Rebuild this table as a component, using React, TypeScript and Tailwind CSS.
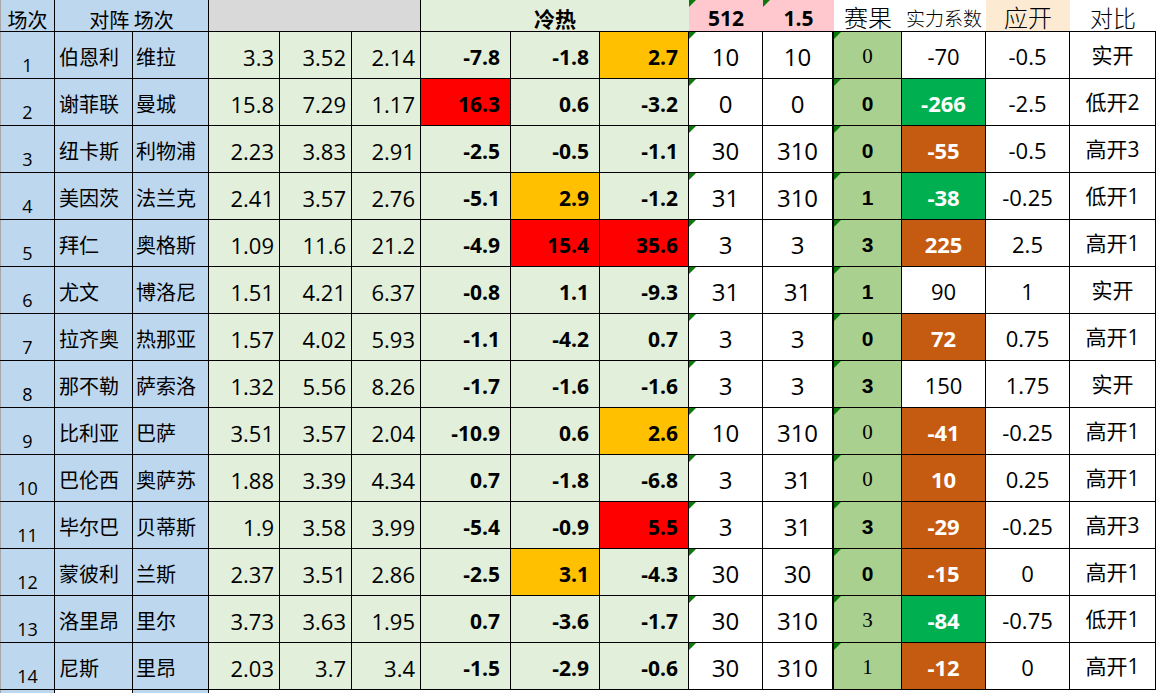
const rows: (string | number)[][] = [
  [1, '伯恩利', '维拉', '3.3', '3.52', '2.14', '-7.8', '-1.8', '2.7', '10', '10', '0', '-70', '-0.5', '实开'],
  [2, '谢菲联', '曼城', '15.8', '7.29', '1.17', '16.3', '0.6', '-3.2', '0', '0', '0', '-266', '-2.5', '低开2'],
  [3, '纽卡斯', '利物浦', '2.23', '3.83', '2.91', '-2.5', '-0.5', '-1.1', '30', '310', '0', '-55', '-0.5', '高开3'],
  [4, '美因茨', '法兰克', '2.41', '3.57', '2.76', '-5.1', '2.9', '-1.2', '31', '310', '1', '-38', '-0.25', '低开1'],
  [5, '拜仁', '奥格斯', '1.09', '11.6', '21.2', '-4.9', '15.4', '35.6', '3', '3', '3', '225', '2.5', '高开1'],
  [6, '尤文', '博洛尼', '1.51', '4.21', '6.37', '-0.8', '1.1', '-9.3', '31', '31', '1', '90', '1', '实开'],
  [7, '拉齐奥', '热那亚', '1.57', '4.02', '5.93', '-1.1', '-4.2', '0.7', '3', '3', '0', '72', '0.75', '高开1'],
  [8, '那不勒', '萨索洛', '1.32', '5.56', '8.26', '-1.7', '-1.6', '-1.6', '3', '3', '3', '150', '1.75', '实开'],
  [9, '比利亚', '巴萨', '3.51', '3.57', '2.04', '-10.9', '0.6', '2.6', '10', '310', '0', '-41', '-0.25', '高开1'],
  [10, '巴伦西', '奥萨苏', '1.88', '3.39', '4.34', '0.7', '-1.8', '-6.8', '3', '31', '0', '10', '0.25', '高开1'],
  [11, '毕尔巴', '贝蒂斯', '1.9', '3.58', '3.99', '-5.4', '-0.9', '5.5', '3', '31', '3', '-29', '-0.25', '高开3'],
  [12, '蒙彼利', '兰斯', '2.37', '3.51', '2.86', '-2.5', '3.1', '-4.3', '30', '30', '0', '-15', '0', '高开1'],
  [13, '洛里昂', '里尔', '3.73', '3.63', '1.95', '0.7', '-3.6', '-1.7', '30', '310', '3', '-84', '-0.75', '低开1'],
  [14, '尼斯', '里昂', '2.03', '3.7', '3.4', '-1.5', '-2.9', '-0.6', '30', '310', '1', '-12', '0', '高开1'],
];

// highlight colours for the 冷热 cells, keyed "row-col"
const heat: Record<string, string> = {
  '1-8': 'bg-[#FFC000]',
  '2-6': 'bg-[#FF0000]',
  '4-7': 'bg-[#FFC000]',
  '5-7': 'bg-[#FF0000]',
  '5-8': 'bg-[#FF0000]',
  '9-8': 'bg-[#FFC000]',
  '11-8': 'bg-[#FF0000]',
  '12-7': 'bg-[#FFC000]',
};

const serifResult = [1, 9, 10, 13, 14];
const greenPower = [2, 4, 13];
const plainPower = [1, 6, 8];

const sans = "font-['Open_Sans','Noto_Sans_CJK_SC',sans-serif]";
const cjk = "font-['Noto_Sans_CJK_SC',sans-serif]";

function Flag() {
  return (
    <span className="absolute left-0 top-0 h-0 w-0 border-t-[7px] border-r-[7px] border-t-[#0a7a0a] border-r-transparent" />
  );
}

function Header() {
  return (
    <div className="flex h-[32px] border-b border-black text-black">
      <div className={`flex w-[55px] shrink-0 items-end justify-center border-l border-r border-l-[#a6a6a6] border-r-black bg-[#BDD7EE] pb-[1px] text-[20px] leading-none ${cjk}`}>
        场次
      </div>
      <div className={`flex w-[154px] shrink-0 items-end justify-center border-r border-black bg-[#BDD7EE] pb-[1px] text-[20px] leading-none ${cjk}`}>
        对阵 场次
      </div>
      <div className="w-[212px] shrink-0 border-r border-black bg-[#D9D9D9]" />
      <div className={`flex w-[268px] shrink-0 items-end justify-center bg-[#E2EFDA] pb-[2px] text-[21px] font-bold leading-none ${cjk}`}>
        冷热
      </div>
      <div className={`relative flex w-[74px] shrink-0 items-end justify-center bg-[#FFC7CE] pb-[2px] text-[21px] font-bold leading-none ${sans}`}>
        <Flag />
        512
      </div>
      <div className={`relative flex w-[71px] shrink-0 items-end justify-center bg-[#FFC7CE] pb-[2px] text-[21px] font-bold leading-none ${sans}`}>
        <Flag />
        1.5
      </div>
      <div className={`flex w-[68px] shrink-0 items-end justify-center bg-white pb-[2px] text-[24px] font-light leading-none ${cjk}`}>
        赛果
      </div>
      <div className={`flex w-[84px] shrink-0 items-end justify-center bg-white pb-[4px] text-[19px] font-light leading-none ${cjk}`}>
        实力系数
      </div>
      <div className={`flex w-[84px] shrink-0 items-end justify-center bg-[#FCEBD2] pb-[2px] text-[24px] font-light leading-none ${cjk}`}>
        应开
      </div>
      <div className={`flex w-[86px] shrink-0 items-end justify-center bg-white pb-[2px] text-[23px] font-light leading-none ${cjk}`}>
        对比
      </div>
    </div>
  );
}

function DataRow({ r }: { r: (string | number)[] }) {
  const n = r[0] as number;
  const odds = ['w-[71px]', 'w-[72px]', 'w-[69px]'];
  const heatW = ['w-[90px]', 'w-[89px]', 'w-[89px]'];
  const power = plainPower.includes(n)
    ? 'bg-white font-normal text-black'
    : greenPower.includes(n)
      ? 'bg-[#00B050] font-bold text-white'
      : 'bg-[#C55A11] font-bold text-white';

  return (
    <div className="flex h-[47px] border-b border-black text-black">
      <div className={`flex w-[55px] shrink-0 items-end justify-center border-l border-r border-l-[#a6a6a6] border-r-black bg-[#BDD7EE] pb-[4px] text-[18px] leading-none ${sans}`}>
        {n}
      </div>
      <div className={`flex w-[78px] shrink-0 items-center border-r border-black bg-[#BDD7EE] pl-[4px] pt-[3px] text-[20px] leading-none ${cjk}`}>
        {r[1]}
      </div>
      <div className={`flex w-[76px] shrink-0 items-center border-r border-black bg-[#BDD7EE] pl-[3px] pt-[3px] text-[20px] leading-none ${cjk}`}>
        {r[2]}
      </div>
      {[3, 4, 5].map((i) => (
        <div
          key={i}
          className={`flex ${odds[i - 3]} shrink-0 items-center justify-end border-r border-black bg-[#E2EFDA] pr-[5px] pt-[4px] text-[22px] leading-none ${sans}`}
        >
          {r[i]}
        </div>
      ))}
      {[6, 7, 8].map((i) => (
        <div
          key={i}
          className={`flex ${heatW[i - 6]} shrink-0 items-center justify-end border-r border-black ${heat[`${n}-${i}`] ?? 'bg-[#E2EFDA]'} pr-[10px] pt-[4px] text-[21px] font-bold leading-none ${sans}`}
        >
          {r[i]}
        </div>
      ))}
      <div className={`relative flex w-[74px] shrink-0 items-center justify-center border-r border-black bg-white pt-[4px] text-[24px] font-normal leading-none ${sans}`}>
        <Flag />
        {r[9]}
      </div>
      <div className={`flex w-[71px] shrink-0 items-center justify-center border-r-2 border-black bg-white pt-[4px] text-[24px] font-normal leading-none ${sans}`}>
        {r[10]}
      </div>
      <div
        className={`relative flex w-[68px] shrink-0 items-center justify-center border-r border-black bg-[#A9D08E] pt-[3px] leading-none ${
          serifResult.includes(n)
            ? "font-['Liberation_Serif',serif] text-[21px]"
            : "font-['Liberation_Sans',sans-serif] text-[21px] font-bold"
        }`}
      >
        <Flag />
        {r[11]}
      </div>
      <div className={`flex w-[84px] shrink-0 items-center justify-center border-r border-black ${power} pt-[1px] text-[22px] leading-none ${sans}`}>
        {r[12]}
      </div>
      <div className={`flex w-[84px] shrink-0 items-center justify-center border-r border-black bg-white pt-[1px] text-[22px] leading-none ${sans}`}>
        {r[13]}
      </div>
      <div className={`flex w-[86px] shrink-0 items-center justify-center border-r border-black bg-white pt-[1px] text-[21px] leading-none ${sans}`}>
        {r[14]}
      </div>
    </div>
  );
}

export default function App() {
  return (
    <div className="h-[693px] w-[1156px] overflow-hidden bg-white">
      <Header />
      {rows.map((r) => (
        <DataRow key={r[0] as number} r={r} />
      ))}
      <div className="flex h-[6px]">
        <div className="w-[55px] shrink-0 border-l border-r border-l-[#a6a6a6] border-r-black bg-[#BDD7EE]" />
        <div className="w-[78px] shrink-0 border-r border-black bg-white" />
        <div className="w-[76px] shrink-0 border-r border-black bg-[#BDD7EE]" />
        <div className="flex-1 bg-white" />
      </div>
    </div>
  );
}
